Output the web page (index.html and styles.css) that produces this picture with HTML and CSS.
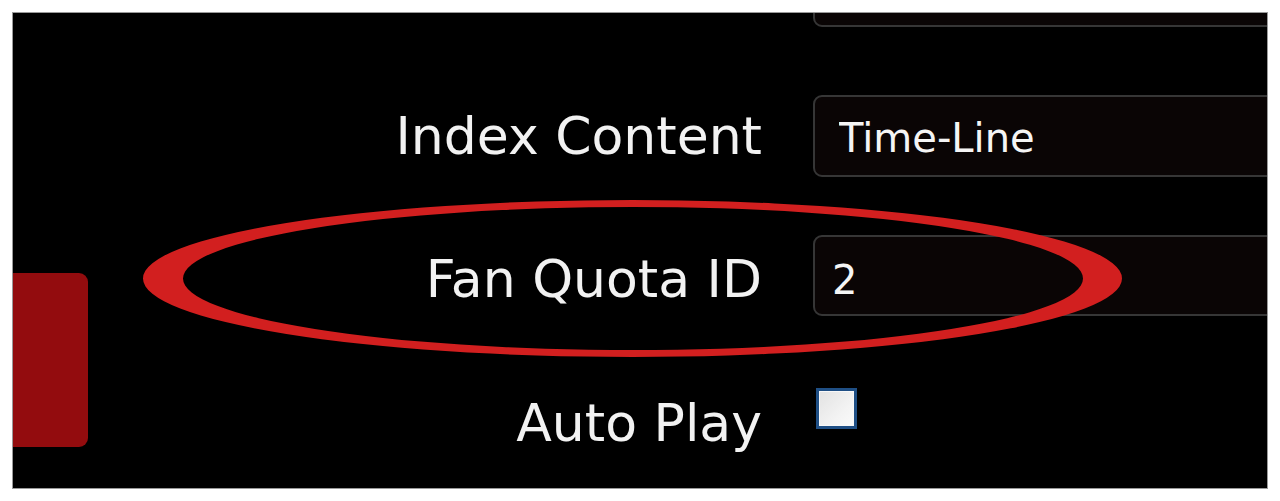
FILE: index.html
```html
<!DOCTYPE html>
<html lang="en">
<head>
<meta charset="utf-8">
<title>Settings</title>
<link rel="stylesheet" href="styles.css">
</head>
<body>
<div class="frame">
  <div class="side-tab"></div>
  <form class="form">
    <div class="row row--first">
      <label class="label"></label>
      <input class="field" type="text" value="" readonly>
    </div>
    <div class="row">
      <label class="label">Index Content</label>
      <input class="field field--select" type="text" value="Time-Line" readonly>
    </div>
    <div class="row">
      <label class="label label--low">Fan Quota ID</label>
      <input class="field field--low" type="text" value="2" readonly>
    </div>
    <div class="row row--check">
      <label class="label">Auto Play</label>
      <input class="check" type="checkbox">
    </div>
  </form>
</div>
<svg class="annotation" width="1280" height="501" viewBox="0 0 1280 501">
  <path fill="#d21f1f" fill-rule="evenodd" d="M143,278.5 a489.5,78.5 0 1,0 979,0 a489.5,78.5 0 1,0 -979,0 Z M183,278.5 a450,71.5 0 1,0 900,0 a450,71.5 0 1,0 -900,0 Z"/>
</svg>
</body>
</html>
```

FILE: styles.css
```css
html, body {
  margin: 0;
  padding: 0;
  background: #ffffff;
}

body {
  position: relative;
  width: 1280px;
  height: 501px;
  overflow: hidden;
  font-family: "DejaVu Sans", Verdana, sans-serif;
}

.frame {
  position: relative;
  box-sizing: border-box;
  margin: 12px 0 0 12px;
  width: 1256px;
  height: 477px;
  border: 1px solid #9a9a9a;
  background: #000000;
  overflow: hidden;
}

.side-tab {
  position: absolute;
  left: -20px;
  top: 260px;
  width: 95px;
  height: 174px;
  background: #930c0e;
  border-radius: 9px;
}

.form {
  display: flex;
  flex-direction: column;
  gap: 58px;
  margin: -68px 0 0 0;
}

.row {
  display: grid;
  grid-template-columns: 749px 520px;
  column-gap: 51px;
  align-items: start;
  height: 82px;
}

.row--first {
  margin-bottom: 10px;
}

.row--check {
  margin-top: 7px;
}

.label {
  display: block;
  text-align: right;
  color: #f2f2f2;
  font-size: 52px;
  line-height: 82px;
  white-space: nowrap;
}

.label--low {
  padding-top: 3px;
}

.field {
  box-sizing: border-box;
  width: 520px;
  height: 82px;
  margin: 0;
  padding: 4px 0 0 20px;
  border: 2px solid #363636;
  border-radius: 9px;
  background: #0a0505;
  color: #f5f5f5;
  font-family: "DejaVu Sans", Verdana, sans-serif;
  font-size: 40px;
  outline: none;
}

.field--select {
  padding-left: 24px;
}

.field--low {
  height: 81px;
  padding-top: 8px;
  padding-left: 17px;
}

.check {
  appearance: none;
  -webkit-appearance: none;
  box-sizing: border-box;
  width: 41px;
  height: 41px;
  margin: 6px 0 0 3px;
  border: 3px solid #1f4f85;
  background: linear-gradient(135deg, #e2e2e2 0%, #f2f2f2 60%, #fafafa 100%);
  box-shadow: inset 0 0 0 1px #f8f8f8;
}

.annotation {
  position: absolute;
  left: 0;
  top: 0;
  pointer-events: none;
}
```
